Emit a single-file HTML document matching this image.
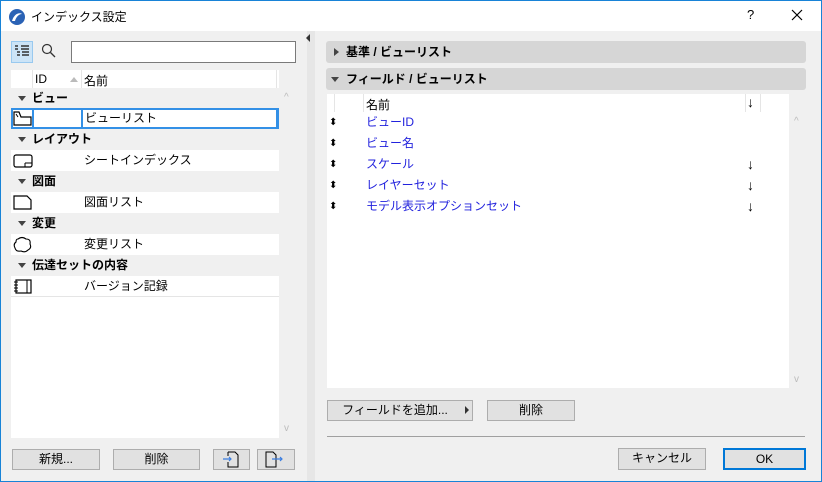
<!DOCTYPE html>
<html><head><meta charset="utf-8"><style>
*{box-sizing:border-box;margin:0;padding:0}
body{width:822px;height:482px;overflow:hidden;background:#f0f0f0;font-family:"Liberation Sans","Noto Sans CJK JP",sans-serif;font-size:12px;color:#000;position:relative}
.a{position:absolute}
.win{left:0;top:0;width:822px;height:482px;border:1px solid #1883d7}
.title{left:1px;top:1px;width:820px;height:30px;background:#fff}
.btn{position:absolute;background:#e1e1e1;border:1px solid #adadad;text-align:center;line-height:19px;font-size:12px}
.row{position:absolute;left:11px;width:268px;height:21px;line-height:21px}
.grp{background:#f0f0f0;font-weight:bold;font-size:12px}
.itm{background:#fff}
.tri{display:inline-block;width:0;height:0;border-left:4px solid transparent;border-right:4px solid transparent;border-top:5px solid #444;margin:0 6px 1px 7px;vertical-align:middle}
.fr{position:absolute;left:327px;width:462px;height:21px;line-height:21px;color:#2222dd}
.fr .h{position:absolute;left:2px;color:#000;font-size:10px}
.fr .n{position:absolute;left:39px}
.fr .d{position:absolute;left:420px;color:#000;font-size:14px}
</style></head><body>
<div class="a win"></div>
<div class="a title"></div>
<svg class="a" style="left:8px;top:8px" width="18" height="18" viewBox="0 0 18 18"><circle cx="9" cy="9" r="8" fill="#2a62b5"/><path d="M4 13 C6 6 11 4 14 6 C11 6 8 9 7 13Z" fill="#fff"/></svg>
<div class="a" style="left:31px;top:8px;font-size:12px">インデックス設定</div>
<div class="a" style="left:747px;top:7px;font-size:13px">?</div>
<svg class="a" style="left:791px;top:9px" width="12" height="12"><path d="M1 1L11 11M11 1L1 11" stroke="#000" stroke-width="1.2"/></svg>
<div class="a" style="left:307px;top:31px;width:8px;height:450px;background:#e6e6e6"></div>
<div class="a" style="left:306px;top:34px;width:0;height:0;border-top:4px solid transparent;border-bottom:4px solid transparent;border-right:4px solid #333"></div>
<div class="a" style="left:11px;top:41px;width:22px;height:22px;background:#cce4f7;border:1px solid #99c9ef"></div>
<svg class="a" style="left:14px;top:44px" width="16" height="16"><path d="M1 2h3M1 5h3M3 8h3M3 11h3M7 2h8M7 5h8M8 8h7M8 11h7" stroke="#333" stroke-width="1.5"/></svg>
<svg class="a" style="left:41px;top:43px" width="16" height="16"><circle cx="6" cy="6" r="4.5" fill="none" stroke="#333" stroke-width="1.2"/><path d="M9.5 9.5L14 14" stroke="#333" stroke-width="1.3"/></svg>
<div class="a" style="left:71px;top:41px;width:225px;height:22px;background:#fff;border:1px solid #7a7a7a"></div>
<div class="a" style="left:11px;top:70px;width:268px;height:368px;background:#fff"></div>
<div class="a" style="left:11px;top:70px;width:266px;height:18px;border-right:1px solid #e5e5e5"></div>
<div class="a" style="left:32px;top:70px;width:1px;height:18px;background:#e5e5e5"></div>
<div class="a" style="left:81px;top:70px;width:1px;height:18px;background:#e5e5e5"></div>
<div class="a" style="left:35px;top:72px">ID</div>
<div class="a" style="left:70px;top:77px;width:0;height:0;border-left:4px solid transparent;border-right:4px solid transparent;border-bottom:5px solid #bbb"></div>
<div class="a" style="left:84px;top:72px">名前</div>
<div class="a" style="left:284px;top:92px;color:#bbb;font-size:10px">^</div>
<div class="a" style="left:284px;top:423px;color:#bbb;font-size:10px">v</div>
<div class="row grp" style="top:88px"><span class="tri"></span>ビュー</div>
<div class="row itm" style="top:108px;border:2px solid #3390e6"></div>
<div class="a" style="left:32px;top:108px;width:2px;height:21px;background:#3390e6"></div>
<svg class="a" style="left:13px;top:111px" width="20" height="16"><path d="M1 1v13h17V6H8L6 1Z" fill="#fff" stroke="#000" stroke-width="1.2"/><path d="M3 3L5 6" stroke="#000"/></svg>
<div class="a" style="left:81px;top:108px;width:197px;height:21px;border:2px solid #3390e6;line-height:17px;padding-left:2px">ビューリスト</div>
<div class="row grp" style="top:129px"><span class="tri"></span>レイアウト</div>
<div class="row itm" style="top:150px"><span class="a" style="left:73px">シートインデックス</span></div>
<svg class="a" style="left:13px;top:154px" width="20" height="14"><rect x="1" y="1" width="18" height="12" rx="2" fill="none" stroke="#000" stroke-width="1.2"/><path d="M12 9h7M12 9v4" stroke="#000"/></svg>
<div class="row grp" style="top:171px"><span class="tri"></span>図面</div>
<div class="row itm" style="top:192px"><span class="a" style="left:73px">図面リスト</span></div>
<svg class="a" style="left:13px;top:195px" width="20" height="15"><path d="M1 1h13l4 4v9H1Z" fill="none" stroke="#000" stroke-width="1.2"/></svg>
<div class="row grp" style="top:213px"><span class="tri"></span>変更</div>
<div class="row itm" style="top:234px"><span class="a" style="left:73px">変更リスト</span></div>
<svg class="a" style="left:13px;top:236px" width="20" height="17"><path d="M5 3q4-3 8 0q5 0 4 5q2 4-2 6q-3 3-7 1q-5 1-6-3q-2-4 1-6q0-3 2-3Z" fill="none" stroke="#000" stroke-width="1.1"/></svg>
<div class="row grp" style="top:255px"><span class="tri"></span>伝達セットの内容</div>
<div class="row itm" style="top:276px;border-bottom:1px solid #e5e5e5"><span class="a" style="left:73px">バージョン記録</span></div>
<svg class="a" style="left:13px;top:279px" width="20" height="15"><rect x="3" y="1" width="15" height="13" fill="none" stroke="#000" stroke-width="1.2"/><path d="M14 1v13M1 3h4M1 6h4M1 9h4M1 12h4" stroke="#000"/></svg>
<div class="btn" style="left:12px;top:449px;width:88px;height:21px">新規...</div>
<div class="btn" style="left:113px;top:449px;width:87px;height:21px">削除</div>
<div class="btn" style="left:213px;top:449px;width:37px;height:21px"></div>
<svg class="a" style="left:222px;top:451px" width="18" height="17"><path d="M6 1h7l3 3v12H6v-5M6 5V1" fill="none" stroke="#000"/><path d="M1 8h8M7 6l2 2-2 2" fill="none" stroke="#3a7de0" stroke-width="1.2"/></svg>
<div class="btn" style="left:257px;top:449px;width:38px;height:21px"></div>
<svg class="a" style="left:264px;top:451px" width="20" height="17"><path d="M2 1h7l3 3v12H2Z" fill="none" stroke="#000"/><path d="M8 8h10M16 6l2 2-2 2" fill="none" stroke="#3a7de0" stroke-width="1.2"/></svg>
<div class="a" style="left:326px;top:41px;width:480px;height:22px;background:#d6d6d6;border-radius:3px;font-weight:bold;line-height:22px;padding-left:20px">基準 / ビューリスト</div>
<div class="a" style="left:334px;top:48px;width:0;height:0;border-top:4px solid transparent;border-bottom:4px solid transparent;border-left:5px solid #444"></div>
<div class="a" style="left:326px;top:68px;width:480px;height:22px;background:#d6d6d6;border-radius:3px;font-weight:bold;line-height:22px;padding-left:20px">フィールド / ビューリスト</div>
<div class="a" style="left:331px;top:77px;width:0;height:0;border-left:4px solid transparent;border-right:4px solid transparent;border-top:5px solid #444"></div>
<div class="a" style="left:327px;top:94px;width:462px;height:294px;background:#fff"></div>
<div class="a" style="left:334px;top:94px;width:1px;height:18px;background:#e5e5e5"></div>
<div class="a" style="left:363px;top:94px;width:1px;height:18px;background:#e5e5e5"></div>
<div class="a" style="left:745px;top:94px;width:1px;height:18px;background:#e5e5e5"></div>
<div class="a" style="left:760px;top:94px;width:1px;height:18px;background:#e5e5e5"></div>
<div class="a" style="left:366px;top:96px">名前</div>
<div class="a" style="left:747px;top:94px;font-size:14px">↓</div>
<div class="a" style="left:794px;top:116px;color:#bbb;font-size:10px">^</div>
<div class="a" style="left:794px;top:374px;color:#bbb;font-size:10px">v</div>
<div class="fr" style="top:112px"><span class="h">⬍</span><span class="n">ビューID</span></div>
<div class="fr" style="top:133px"><span class="h">⬍</span><span class="n">ビュー名</span></div>
<div class="fr" style="top:154px"><span class="h">⬍</span><span class="n">スケール</span><span class="d">↓</span></div>
<div class="fr" style="top:175px"><span class="h">⬍</span><span class="n">レイヤーセット</span><span class="d">↓</span></div>
<div class="fr" style="top:196px"><span class="h">⬍</span><span class="n">モデル表示オプションセット</span><span class="d">↓</span></div>
<div class="btn" style="left:327px;top:400px;width:146px;height:21px;padding-right:10px">フィールドを追加...</div>
<div class="a" style="left:465px;top:406px;width:0;height:0;border-top:4px solid transparent;border-bottom:4px solid transparent;border-left:4px solid #333"></div>
<div class="btn" style="left:487px;top:400px;width:88px;height:21px">削除</div>
<div class="a" style="left:327px;top:436px;width:478px;height:1px;background:#a0a0a0"></div>
<div class="btn" style="left:618px;top:448px;width:88px;height:22px">キャンセル</div>
<div class="btn" style="left:723px;top:448px;width:83px;height:22px;border:2px solid #0078d7;line-height:18px">OK</div>
</body></html>
